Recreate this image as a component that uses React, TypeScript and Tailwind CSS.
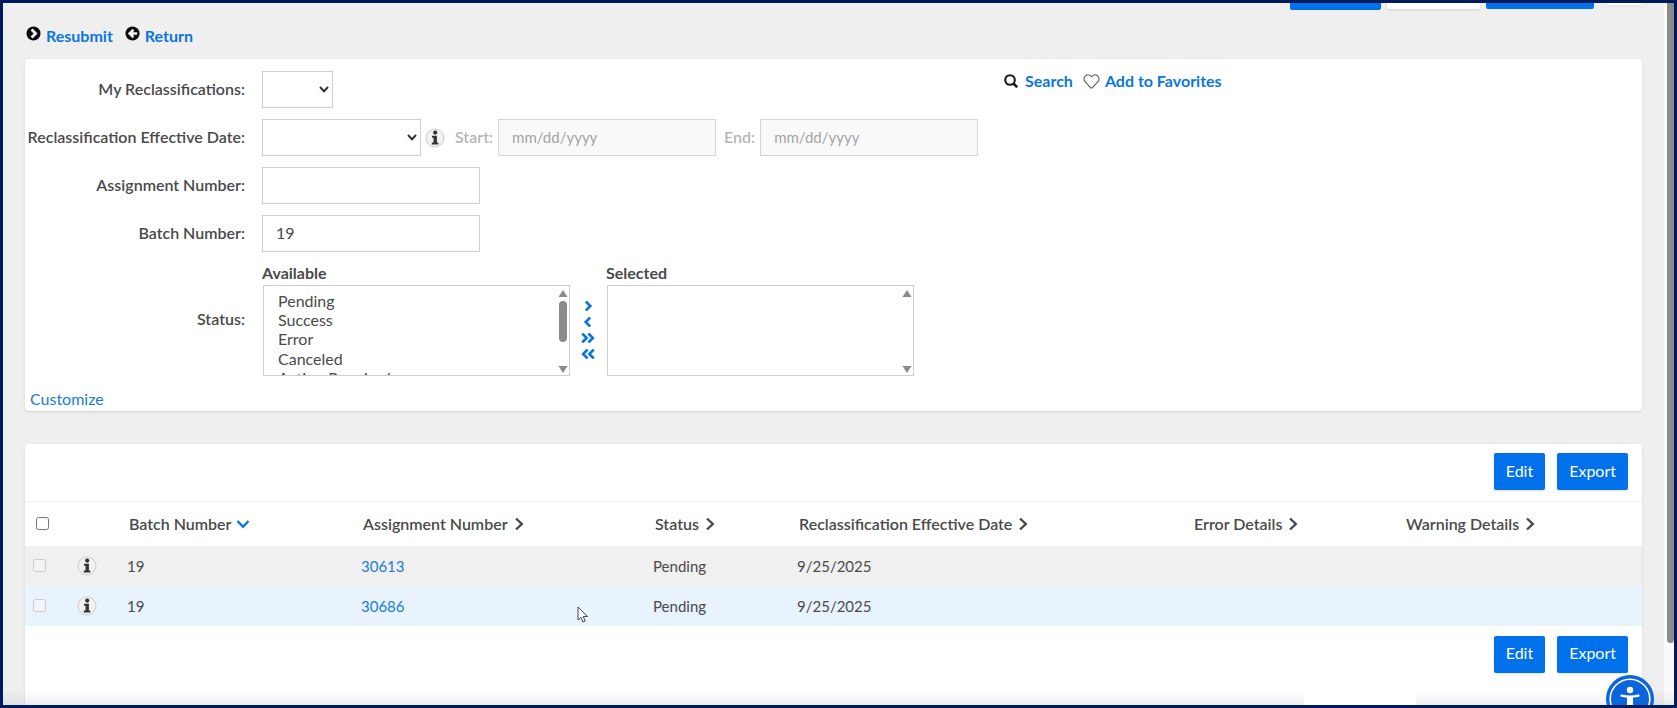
import React, { useState } from 'react';
import { FaHeart } from 'react-icons/fa';
import clsx from 'clsx';

const statuses = ['Pending', 'Success', 'Error', 'Canceled', 'Action Required'];

const columns = [
  { name: 'Batch Number', width: 'w-[234px]', sorted: true },
  { name: 'Assignment Number', width: 'w-[292px]' },
  { name: 'Status', width: 'w-[144px]' },
  { name: 'Reclassification Effective Date', width: 'w-[395px]' },
  { name: 'Error Details', width: 'w-[212px]' },
  { name: 'Warning Details', width: '' },
];

const rows = [
  { batch: '19', assignment: '30613', status: 'Pending', date: '9/25/2025' },
  { batch: '19', assignment: '30686', status: 'Pending', date: '9/25/2025' },
];

const field = 'h-[37px] border border-[#cfcfcf] bg-white px-[13px] pb-0.5 outline-none';
const dateField = 'ml-[5px] h-[37px] w-[218px] border border-[#d5d5d5] bg-[#f9f9f9] px-[13px] pb-0.5 text-[15px] placeholder:text-[#a5a5a5]';

const ArrowCircle = ({ back = false }: { back?: boolean }) => (
  <svg viewBox="0 0 16 16" className="size-[15px] shrink-0" fill="none">
    <circle cx="8" cy="8" r="7.5" fill="#0b0b0b" />
    {back ? (
      <path d="M13 8H6.500M9 4L5 8l4 4" stroke="#f0f0f0" strokeWidth="2.800" />
    ) : (
      <path d="M6 3.800L10.200 8l-4.200 4.200" stroke="#f0f0f0" strokeWidth="3" />
    )}
  </svg>
);

const InfoIcon = () => (
  <svg viewBox="0 0 20 20" className="size-5" aria-hidden="true">
    <circle cx="10" cy="10" r="9" fill="#f1f1f1" stroke="#cccccc" />
    <circle cx="10.2" cy="4.6" r="2.1" fill="#333" />
    <path d="M7 7.800h4.900v6.600h1.500v2H6.800v-2h1.700V9.800H7z" fill="#333" />
  </svg>
);

const Chevron = ({ className }: { className?: string }) => (
  <svg viewBox="0 0 14 14" className={clsx('size-[14px] shrink-0', className)} fill="none" stroke="currentColor" strokeWidth="2.4">
    <path d="M4 1.500L9.800 7 4 12.500" />
  </svg>
);

const MoveIcon = ({ double = false, left = false }: { double?: boolean; left?: boolean }) => (
  <svg viewBox="0 0 14 10" className={clsx('h-[10px] w-[14px]', left && 'rotate-180')} fill="none" stroke="#0b76e0" strokeWidth="2.6">
    {double ? <path d="M1.200 .500L5.700 5l-4.500 4.500M7.400 .500L11.900 5l-4.500 4.500" /> : <path d="M4.800 .500L9.300 5l-4.500 4.500" />}
  </svg>
);

const Select = ({ id, className }: { id: string; className: string }) => (
  <div className="relative">
    <select id={id} className={clsx(field, 'block appearance-none', className)} />
    <svg viewBox="0 0 10 7" className="pointer-events-none absolute top-[15px] right-1 h-[7px] w-[10px]" fill="none" stroke="#333" strokeWidth="2">
      <path d="M1 1l4 4.200L9 1" />
    </svg>
  </div>
);

const ListBox = ({ id, label, options, thumb }: { id: string; label: string; options: string[]; thumb?: boolean }) => (
  <div>
    <label htmlFor={id} className="block h-[22px] font-bold">{label}</label>
    <div className="ml-px flex h-[91px] w-[307px] border border-[#cfcfcf]">
      <select id={id} multiple className="min-w-0 flex-1 appearance-none overflow-hidden bg-transparent px-0 py-[5px] outline-none [scrollbar-width:none]">
        {options.map((o) => (
          <option key={o} className="px-[14px] py-0 leading-5">{o}</option>
        ))}
      </select>
      <div className="flex w-3 flex-col items-center pt-1 pb-0.5">
        <svg viewBox="0 0 10 7" className="h-[7px] w-[10px]"><path d="M5 0l4.500 7h-9z" fill="#8a8a8a" /></svg>
        {thumb && <div className="mt-1 h-[41px] w-2 rounded-full bg-[#8a8a8a]" />}
        <svg viewBox="0 0 10 7" className="mt-auto h-[7px] w-[10px]"><path d="M5 7L.500 0h9z" fill="#8a8a8a" /></svg>
      </div>
    </div>
  </div>
);

const Field = ({ id, label, children }: { id: string; label: string; children: React.ReactNode }) => (
  <div className="flex items-center">
    <label htmlFor={id} className="w-[237px] shrink-0 pr-[17px] pb-0.5 text-right font-semibold whitespace-nowrap">{label}</label>
    {children}
  </div>
);

const Actions = () => (
  <div className="flex justify-end gap-3 px-[14px]">
    <button className="h-[37px] rounded-xs bg-[#0071eb] px-3 pb-0.5 text-white shadow-sm">Edit</button>
    <button className="h-[37px] rounded-xs bg-[#0071eb] px-3 pb-0.5 text-white shadow-sm">Export</button>
  </div>
);

const App: React.FC = () => {
  const [batch, setBatch] = useState('19');

  return (
    <div className="relative flex h-screen overflow-hidden border-3 border-[#001a5e] bg-[#efefef] font-[Lato,sans-serif] text-base leading-5 text-[#4a4a4a]">
      <main className="flex min-w-0 flex-1 flex-col px-[22px]">
        {/* Bottom edge of the toolbar scrolled out of view */}
        <div className="flex h-[7px] shrink-0 items-start justify-end">
          <div className="h-[7px] w-[91px] rounded-b-xs bg-[#0071eb]" />
          <div className="ml-1.5 h-1.5 w-[93px] rounded-b-xs bg-white shadow-sm" />
          <div className="ml-1.5 h-1.5 w-[108px] rounded-b-xs bg-[#0071eb]" />
          <div className="ml-[13px] h-0.5 w-[35px] rounded-b-xs bg-white shadow-sm" />
        </div>

        <div className="flex h-[49px] shrink-0 items-start gap-3 pt-4 pl-px font-bold text-[#0b76e0]">
          <a href="#resubmit" className="flex items-start gap-[5px]">
            <ArrowCircle />
            Resubmit
          </a>
          <a href="#return" className="flex items-start gap-[5px]">
            <ArrowCircle back />
            Return
          </a>
        </div>

        <section className="flex h-[352px] shrink-0 flex-col rounded bg-white pt-3 shadow-sm">
          <div className="flex">
            <form className="flex w-[979px] flex-col gap-[11px]" onSubmit={(e) => e.preventDefault()}>
              <Field id="mine" label="My Reclassifications:">
                <Select id="mine" className="w-[71px]" />
              </Field>
              <Field id="effective" label="Reclassification Effective Date:">
                <Select id="effective" className="w-[159px]" />
                <span className="ml-1"><InfoIcon /></span>
                <label htmlFor="start" className="ml-[10px] pb-0.5 font-semibold text-[#b5b5b5]">Start:</label>
                <input id="start" disabled placeholder="mm/dd/yyyy" className={dateField} />
                <label htmlFor="end" className="ml-2 pb-0.5 font-semibold text-[#b5b5b5]">End:</label>
                <input id="end" disabled placeholder="mm/dd/yyyy" className={dateField} />
              </Field>
              <Field id="assignment" label="Assignment Number:">
                <input id="assignment" className={clsx(field, 'w-[218px]')} />
              </Field>
              <Field id="batch" label="Batch Number:">
                <input id="batch" value={batch} onChange={(e) => setBatch(e.target.value)} className={clsx(field, 'w-[218px]')} />
              </Field>
              <Field id="available" label="Status:">
                <ListBox id="available" label="Available" options={statuses} thumb />
                <div className="mx-[11px] flex flex-col gap-1.5 pt-5">
                  <button type="button" aria-label="Add" className="block"><MoveIcon /></button>
                  <button type="button" aria-label="Remove" className="block"><MoveIcon left /></button>
                  <button type="button" aria-label="Add all" className="block"><MoveIcon double /></button>
                  <button type="button" aria-label="Remove all" className="block"><MoveIcon double left /></button>
                </div>
                <ListBox id="selected" label="Selected" options={[]} />
              </Field>
            </form>
            <div className="flex items-center gap-[11px] self-start font-bold text-[#0b76e0]">
              <a href="#search" className="flex items-center gap-[7px]">
                <svg viewBox="0 0 14 14" className="size-[14px]" fill="none" stroke="#1a1a1a">
                  <circle cx="6" cy="6" r="4.800" strokeWidth="2.100" />
                  <path d="M9.500 9.500l3.700 3.700" strokeWidth="2.600" />
                </svg>
                Search
              </a>
              <a href="#favorites" className="flex items-center gap-1.5">
                <FaHeart className="size-[15px] overflow-visible fill-white stroke-[#555] stroke-[36px]" />
                Add to Favorites
              </a>
            </div>
          </div>
          <a href="#customize" className="mt-auto mb-0.5 self-start px-[5px] text-[#1a7cd8]">Customize</a>
        </section>

        <section className="mt-[33px] flex-1 rounded-t bg-white pt-[9px] shadow-sm">
          <Actions />
          <table className="mt-[11px] w-full table-fixed border-t border-[#f3f3f3] text-left">
            <thead>
              <tr className="h-[44px]">
                <th className="w-[45px] pl-[11px]"><input type="checkbox" aria-label="Select all rows" className="block size-[13px]" /></th>
                <th className="w-[49px]" />
                {columns.map((c) => (
                  <th key={c.name} className={clsx('px-[10px] font-semibold', c.width)}>
                    <button className="flex items-center gap-1">
                      {c.name}
                      <Chevron className={clsx(c.sorted && 'rotate-90 text-[#0b76e0]')} />
                    </button>
                  </th>
                ))}
              </tr>
            </thead>
            <tbody className="text-[15px]">
              {rows.map((r) => (
                <tr key={r.assignment} className="h-[40px] odd:bg-[#f0f0f0] even:bg-[#e8f3fe]">
                  <td className="pl-2"><input type="checkbox" disabled aria-label={r.assignment} className="block size-[13px]" /></td>
                  <td className="pl-[7px]"><InfoIcon /></td>
                  <td className="px-2">{r.batch}</td>
                  <td className="px-2"><a href={`#${r.assignment}`} className="text-[#1a7cd8]">{r.assignment}</a></td>
                  <td className="px-2">{r.status}</td>
                  <td className="px-2">{r.date}</td>
                  <td />
                  <td />
                </tr>
              ))}
            </tbody>
          </table>
          <div className="mt-[10px]"><Actions /></div>
        </section>
      </main>

      <div className="w-[10px] shrink-0 bg-[#fafafa] pl-[3px]">
        <div className="h-[640px] rounded-b-full bg-[#8b8b8b]" />
      </div>

      <div className="pointer-events-none absolute inset-x-0 bottom-0 h-4 bg-linear-to-b from-transparent to-black/6">
        <div className="ml-[1301px] h-full w-[112px] bg-white" />
      </div>

      <button aria-label="Accessibility options" className="absolute right-5 -bottom-[18px] size-12">
        <svg viewBox="0 0 48 48" className="size-12">
          <circle cx="24" cy="24" r="24" fill="#0b66dc" />
          <circle cx="24" cy="24" r="19.800" fill="none" stroke="#fff" strokeWidth="1.600" />
          <circle cx="24" cy="15" r="3.200" fill="#fff" />
          <path d="M15.500 20.600q8.500 2 17 0" fill="none" stroke="#fff" strokeWidth="2.400" strokeLinecap="round" />
          <path d="M21 21h6v8l2 8-2.200.600L24.500 30h-1l-2.300 7.600L19 37l2-8z" fill="#fff" />
        </svg>
      </button>

      {/* Mouse pointer */}
      <svg viewBox="0 0 12 18" className="pointer-events-none absolute top-[603px] left-[574px] h-[18px] w-3">
        <path d="M1 1v13l3-2.700 2 4.700 2.200-1-2-4.500h4.300z" fill="#fff" stroke="#3c4654" />
      </svg>
    </div>
  );
};

export default App;
